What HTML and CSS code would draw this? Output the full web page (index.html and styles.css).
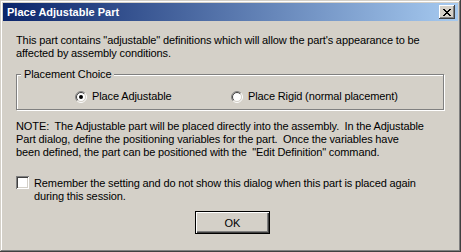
FILE: index.html
```html
<!DOCTYPE html>
<html>
<head>
<meta charset="utf-8">
<link rel="stylesheet" href="styles.css">
</head>
<body>
<div class="window">
  <div class="titlebar">
    <span class="title">Place Adjustable Part</span>
    <button class="close" aria-label="Close">
      <svg width="8" height="7" viewBox="0 0 8 7" shape-rendering="crispEdges"><path d="M0 0h2v1H0zM6 0h2v1H6zM1 1h2v1H1zM5 1h2v1H5zM2 2h4v1H2zM3 3h2v1H3zM2 4h4v1H2zM1 5h2v1H1zM5 5h2v1H5zM0 6h2v1H0zM6 6h2v1H6z" fill="#000"/></svg>
    </button>
  </div>
  <div class="client">
    <p class="intro">This part contains "adjustable" definitions which will allow the part's appearance to be<br>affected by assembly conditions.</p>
    <div class="group">
      <div class="group-label">Placement Choice</div>
      <div class="radios">
        <label class="radio">
          <svg class="radio-icon" width="12" height="12" viewBox="0 0 12 12"><circle cx="6" cy="6" r="4.5" fill="#fff"/><path d="M2.111 9.889A5.5 5.5 0 0 1 9.889 2.111" fill="none" stroke="#808080"/><path d="M9.889 2.111A5.5 5.5 0 0 1 2.111 9.889" fill="none" stroke="#fff"/><path d="M2.818 9.182A4.5 4.5 0 0 1 9.182 2.818" fill="none" stroke="#404040"/><path d="M9.182 2.818A4.5 4.5 0 0 1 2.818 9.182" fill="none" stroke="#d4d0c8"/><circle cx="6" cy="6" r="2" fill="#000"/></svg>
          <span>Place Adjustable</span>
        </label>
        <label class="radio">
          <svg class="radio-icon" width="12" height="12" viewBox="0 0 12 12"><circle cx="6" cy="6" r="4.5" fill="#fff"/><path d="M2.111 9.889A5.5 5.5 0 0 1 9.889 2.111" fill="none" stroke="#808080"/><path d="M9.889 2.111A5.5 5.5 0 0 1 2.111 9.889" fill="none" stroke="#fff"/><path d="M2.818 9.182A4.5 4.5 0 0 1 9.182 2.818" fill="none" stroke="#404040"/><path d="M9.182 2.818A4.5 4.5 0 0 1 2.818 9.182" fill="none" stroke="#d4d0c8"/></svg>
          <span>Place Rigid (normal placement)</span>
        </label>
      </div>
    </div>
    <p class="note">NOTE:  The Adjustable part will be placed directly into the assembly.  In the Adjustable
Part dialog, define the positioning variables for the part.  Once the variables have
been defined, the part can be positioned with the  "Edit Definition" command.</p>
    <label class="check-row">
      <span class="checkbox"></span>
      <span class="check-text">Remember the setting and do not show this dialog when this part is placed again<br>during this session.</span>
    </label>
    <div class="actions">
      <button class="ok">OK</button>
    </div>
  </div>
</div>
</body>
</html>
```

FILE: styles.css
```css
* { box-sizing: border-box; }
html, body {
  margin: 0;
  padding: 0;
  background: #d4d0c8;
}
body {
  font-family: "Liberation Sans", Arial, sans-serif;
  font-size: 11px;
  line-height: 13px;
  letter-spacing: -0.1px;
  word-spacing: -0.2px;
  color: #000;
}
.window {
  width: 461px;
  height: 252px;
  padding: 3px;
  background: #d4d0c8;
  box-shadow: inset -1px -1px #404040, inset 1px 1px #d4d0c8, inset -2px -2px #808080, inset 2px 2px #fff;
  display: flex;
  flex-direction: column;
}
.titlebar {
  height: 18px;
  display: flex;
  align-items: center;
  justify-content: space-between;
  background: linear-gradient(to right, #0a246a, #a6caf0);
  padding-left: 4px;
  padding-right: 3px;
}
.title {
  color: #fff;
  font-weight: bold;
  font-size: 11px;
  line-height: 13px;
  letter-spacing: normal;
  word-spacing: normal;
}
.close {
  width: 16px;
  height: 14px;
  padding: 0;
  margin: 0;
  border: none;
  background: #d4d0c8;
  box-shadow: inset -1px -1px #404040, inset 1px 1px #fff, inset -2px -2px #808080;
  display: flex;
  align-items: center;
  justify-content: center;
}
.close svg { display: block; }
.client {
  flex: 1;
  padding: 0 14px 0 13px;
  display: flex;
  flex-direction: column;
}
.intro {
  margin: 13px 0 0;
  white-space: nowrap;
}
.group {
  margin-top: 14px;
  width: 428px;
  height: 36px;
  border: 1px solid #808080;
  box-shadow: inset 1px 1px #fff, 1px 1px #fff;
}
.group-label {
  margin: -7px 0 0 4px;
  padding: 0 3px;
  width: fit-content;
  background: #d4d0c8;
}
.radios {
  margin-top: 9px;
  padding-left: 58px;
  display: grid;
  grid-template-columns: 156px auto;
}
.radio {
  display: flex;
  align-items: center;
  gap: 5px;
  height: 13px;
}
.radio-icon { display: block; flex: none; }
.note {
  margin: 10px 0 0;
  white-space: pre;
}
.check-row {
  margin-top: 17px;
  display: flex;
  align-items: flex-start;
  gap: 5px;
}
.checkbox {
  flex: none;
  width: 13px;
  height: 13px;
  background: #fff;
  box-shadow: inset 1px 1px #808080, inset -1px -1px #fff, inset 2px 2px #404040, inset -2px -2px #d4d0c8;
}
.check-text {
  white-space: nowrap;
  padding-top: 1px;
}
.actions {
  margin-top: 8px;
  display: flex;
  justify-content: center;
  padding-left: 5px;
}
.ok {
  width: 75px;
  height: 23px;
  padding: 0;
  border: 1px solid #000;
  background: #d4d0c8;
  box-shadow: inset 1px 1px #fff, inset -1px -1px #404040, inset -2px -2px #808080;
  font-family: "Liberation Sans", Arial, sans-serif;
  font-size: 11px;
  letter-spacing: normal;
  color: #000;
}
```
